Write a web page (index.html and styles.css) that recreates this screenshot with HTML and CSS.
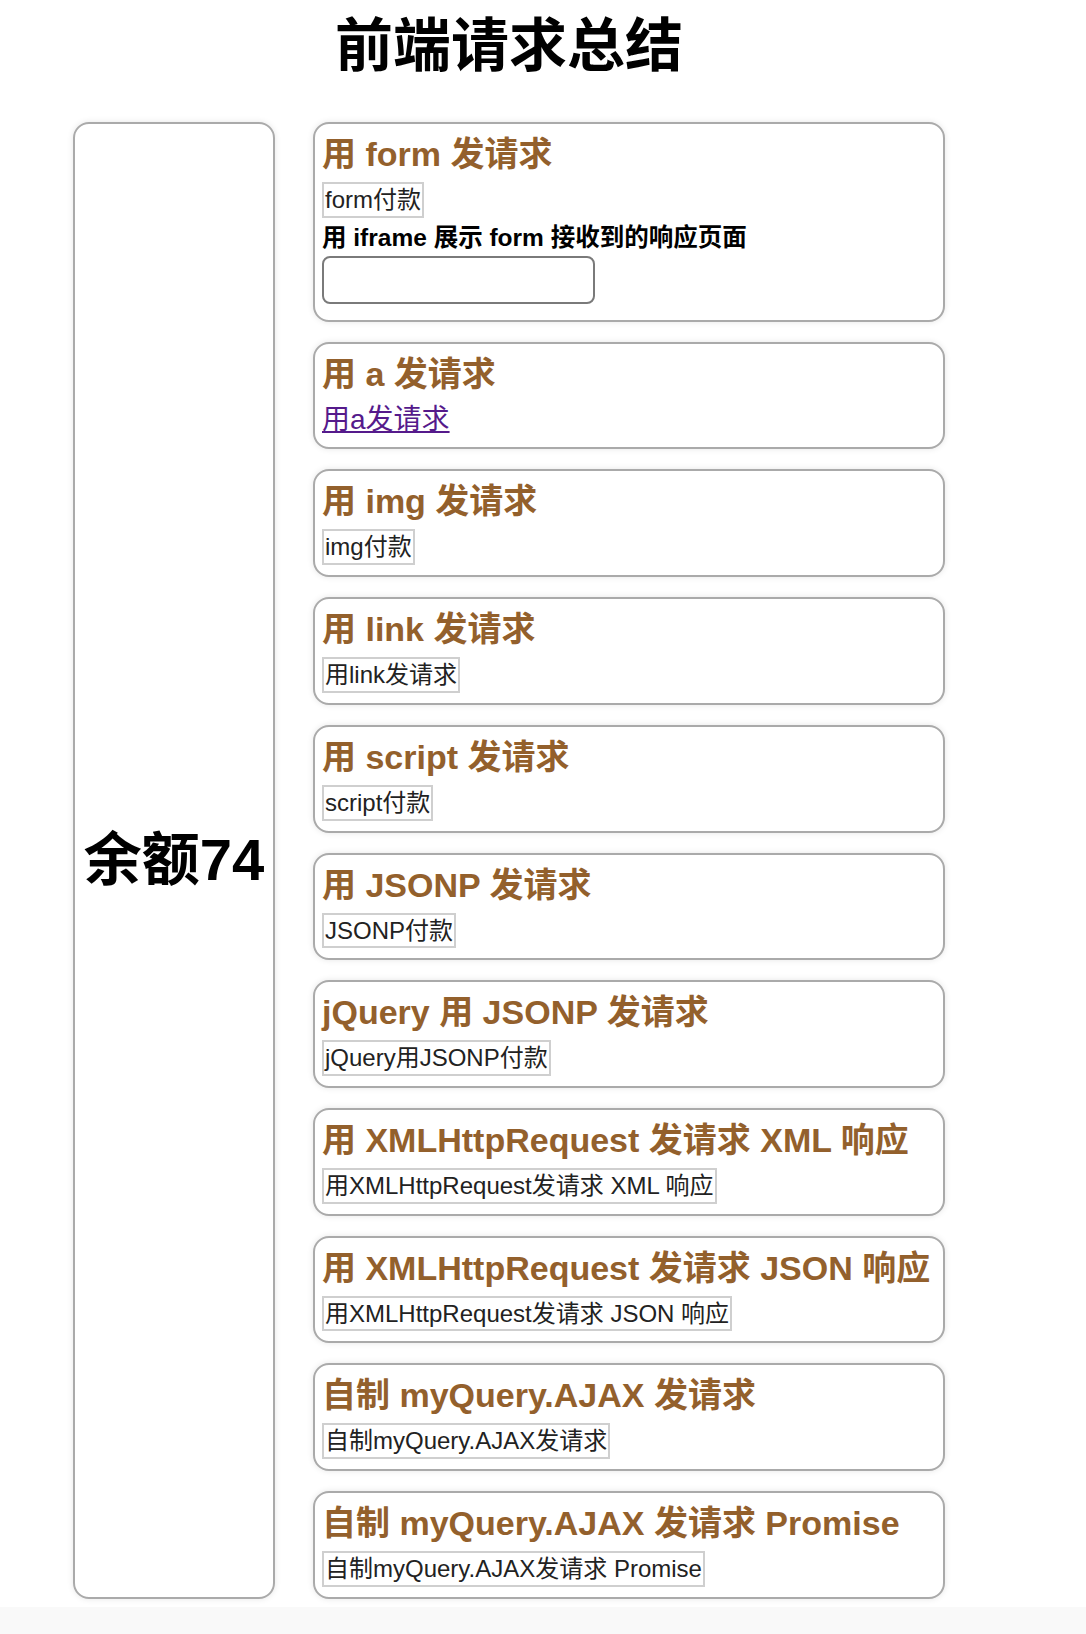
FILE: index.html
```html
<!DOCTYPE html>
<html lang="zh-CN">
<head>
<meta charset="utf-8">
<title>前端请求总结</title>
<link rel="stylesheet" href="styles.css">
</head>
<body>
<div class="page">
  <h1 class="title">前端请求总结</h1>
  <div class="layout">
    <div class="balance-card">
      <div class="balance">余额74</div>
    </div>
    <div class="cards">
      <section class="card">
        <h2 class="card-title">用 form 发请求</h2>
        <button class="btn">form付款</button>
        <h3 class="sub">用 iframe 展示 form 接收到的响应页面</h3>
        <div class="frame"></div>
      </section>
      <section class="card">
        <h2 class="card-title">用 a 发请求</h2>
        <a class="link" href="#">用a发请求</a>
      </section>
      <section class="card">
        <h2 class="card-title">用 img 发请求</h2>
        <button class="btn">img付款</button>
      </section>
      <section class="card">
        <h2 class="card-title">用 link 发请求</h2>
        <button class="btn">用link发请求</button>
      </section>
      <section class="card">
        <h2 class="card-title">用 script 发请求</h2>
        <button class="btn">script付款</button>
      </section>
      <section class="card">
        <h2 class="card-title">用 JSONP 发请求</h2>
        <button class="btn">JSONP付款</button>
      </section>
      <section class="card">
        <h2 class="card-title">jQuery 用 JSONP 发请求</h2>
        <button class="btn">jQuery用JSONP付款</button>
      </section>
      <section class="card">
        <h2 class="card-title">用 XMLHttpRequest 发请求 XML 响应</h2>
        <button class="btn">用XMLHttpRequest发请求 XML 响应</button>
      </section>
      <section class="card">
        <h2 class="card-title">用 XMLHttpRequest 发请求 JSON 响应</h2>
        <button class="btn">用XMLHttpRequest发请求 JSON 响应</button>
      </section>
      <section class="card">
        <h2 class="card-title">自制 myQuery.AJAX 发请求</h2>
        <button class="btn">自制myQuery.AJAX发请求</button>
      </section>
      <section class="card">
        <h2 class="card-title">自制 myQuery.AJAX 发请求 Promise</h2>
        <button class="btn">自制myQuery.AJAX发请求 Promise</button>
      </section>
    </div>
  </div>
</div>
</body>
</html>
```

FILE: styles.css
```css
html {
  background: #f9f9f9;
}

body {
  margin: 0;
  font-family: "Liberation Sans", "Noto Sans CJK SC", sans-serif;
  color: #000;
}

.page {
  background: #fff;
  padding-bottom: 8px;
}

.title {
  width: 872px;
  margin: 0 0 0 73px;
  padding: 13px 0 43px;
  text-align: center;
  font-size: 58px;
  line-height: 66px;
  font-weight: 700;
}

.layout {
  display: flex;
  align-items: stretch;
  gap: 38px;
  padding-left: 73px;
}

.balance-card {
  width: 202px;
  box-sizing: border-box;
  border: 2px solid #aaa;
  border-radius: 16px;
  box-shadow: 0 0 6px rgba(0, 0, 0, 0.1);
  display: flex;
  align-items: center;
  justify-content: center;
}

.balance {
  font-size: 58px;
  font-weight: 700;
  line-height: 66px;
  white-space: nowrap;
}

.cards {
  width: 632px;
  display: flex;
  flex-direction: column;
  gap: 20px;
}

.card {
  box-sizing: border-box;
  border: 2px solid #aaa;
  border-radius: 16px;
  padding: 10px 7px;
  box-shadow: 0 0 6px rgba(0, 0, 0, 0.1);
  background: #fff;
}

.card-title {
  margin: 0 0 8px;
  font-size: 34px;
  line-height: 40px;
  font-weight: 700;
  color: #93602c;
  white-space: nowrap;
}

.btn {
  display: block;
  margin: 0;
  padding: 0 1px;
  font-family: inherit;
  font-size: 24px;
  line-height: 31.7px;
  color: #222;
  background: #fff;
  border: 2px solid #cfcfcf;
  border-radius: 0;
}

.sub {
  margin: 5px 0 0;
  font-size: 24.5px;
  line-height: 30px;
  font-weight: 700;
}

.frame {
  width: 273px;
  height: 48px;
  box-sizing: border-box;
  margin: 3px 0 6px;
  border: 2px solid #7a7a7a;
  border-radius: 8px;
}

.link {
  display: inline-block;
  font-size: 28px;
  line-height: 35.7px;
  color: #551a8b;
  text-decoration: underline;
}
```
